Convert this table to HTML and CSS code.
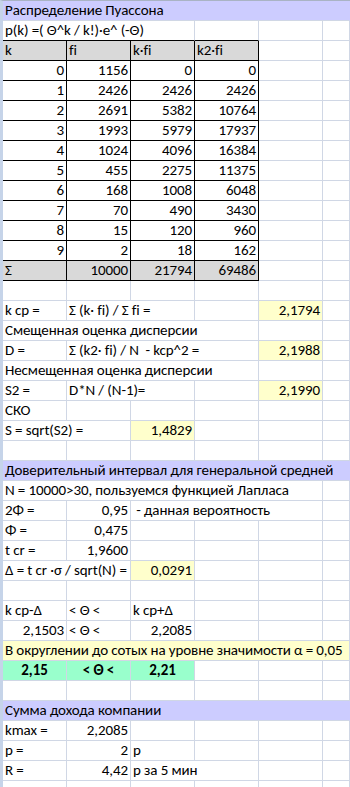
FILE: index.html
```html
<!DOCTYPE html>
<html lang="ru">
<head>
<meta charset="utf-8">
<title>Распределение Пуассона</title>
<link rel="stylesheet" href="styles.css">
</head>
<body>
<div class="sheet">
  <div class="c s6 purple">Распределение Пуассона</div>
  <div class="c s3 bb">p(k) =( Θ^k / k!)·e^ (-Θ)</div><div class="c bb"></div><div class="c"></div><div class="c"></div>
  <div class="c tb gray">k</div><div class="c tb gray">fi</div><div class="c tb gray">k·fi</div><div class="c tb gray">k2·fi</div><div class="c"></div><div class="c"></div>
  <div class="c tb r">0</div><div class="c tb r">1156</div><div class="c tb r">0</div><div class="c tb r">0</div><div class="c"></div><div class="c"></div>
  <div class="c tb r">1</div><div class="c tb r">2426</div><div class="c tb r">2426</div><div class="c tb r">2426</div><div class="c"></div><div class="c"></div>
  <div class="c tb r">2</div><div class="c tb r">2691</div><div class="c tb r">5382</div><div class="c tb r">10764</div><div class="c"></div><div class="c"></div>
  <div class="c tb r">3</div><div class="c tb r">1993</div><div class="c tb r">5979</div><div class="c tb r">17937</div><div class="c"></div><div class="c"></div>
  <div class="c tb r">4</div><div class="c tb r">1024</div><div class="c tb r">4096</div><div class="c tb r">16384</div><div class="c"></div><div class="c"></div>
  <div class="c tb r">5</div><div class="c tb r">455</div><div class="c tb r">2275</div><div class="c tb r">11375</div><div class="c"></div><div class="c"></div>
  <div class="c tb r">6</div><div class="c tb r">168</div><div class="c tb r">1008</div><div class="c tb r">6048</div><div class="c"></div><div class="c"></div>
  <div class="c tb r">7</div><div class="c tb r">70</div><div class="c tb r">490</div><div class="c tb r">3430</div><div class="c"></div><div class="c"></div>
  <div class="c tb r">8</div><div class="c tb r">15</div><div class="c tb r">120</div><div class="c tb r">960</div><div class="c"></div><div class="c"></div>
  <div class="c tb r">9</div><div class="c tb r">2</div><div class="c tb r">18</div><div class="c tb r">162</div><div class="c"></div><div class="c"></div>
  <div class="c tb gray">Σ</div><div class="c tb gray r">10000</div><div class="c tb gray r">21794</div><div class="c tb gray r">69486</div><div class="c"></div><div class="c"></div>
  <div class="c"></div><div class="c"></div><div class="c"></div><div class="c"></div><div class="c"></div><div class="c"></div>
  <div class="c">k cp =</div><div class="c s2">Σ (k· fi) / Σ fi =</div><div class="c"></div><div class="c r yellow">2,1794</div><div class="c"></div>
  <div class="c s4">Смещенная оценка дисперсии</div><div class="c"></div><div class="c"></div>
  <div class="c">D =</div><div class="c s3">Σ (k2· fi) / N&nbsp; - kcp^2 =</div><div class="c r yellow">2,1988</div><div class="c"></div>
  <div class="c s4">Несмещенная оценка дисперсии</div><div class="c"></div><div class="c"></div>
  <div class="c">S2 =</div><div class="c s2">D*N / (N-1)=</div><div class="c"></div><div class="c r yellow">2,1990</div><div class="c"></div>
  <div class="c">СКО</div><div class="c"></div><div class="c"></div><div class="c"></div><div class="c"></div><div class="c"></div>
  <div class="c s2">S = sqrt(S2) =</div><div class="c r yellow">1,4829</div><div class="c"></div><div class="c"></div><div class="c"></div>
  <div class="c"></div><div class="c"></div><div class="c"></div><div class="c"></div><div class="c"></div><div class="c"></div>
  <div class="c s6 purple">Доверительный интервал для генеральной средней</div>
  <div class="c s5">N = 10000&gt;30, пользуемся функцией Лапласа</div><div class="c"></div>
  <div class="c">2Φ =</div><div class="c r">0,95</div><div class="c s3">&nbsp;- данная вероятность</div><div class="c"></div>
  <div class="c">Φ =</div><div class="c r">0,475</div><div class="c"></div><div class="c"></div><div class="c"></div><div class="c"></div>
  <div class="c">t cr =</div><div class="c r">1,9600</div><div class="c"></div><div class="c"></div><div class="c"></div><div class="c"></div>
  <div class="c s2">Δ = t cr ·σ / sqrt(N) =</div><div class="c r yellow">0,0291</div><div class="c"></div><div class="c"></div><div class="c"></div>
  <div class="c"></div><div class="c"></div><div class="c"></div><div class="c"></div><div class="c"></div><div class="c"></div>
  <div class="c">k cp-Δ</div><div class="c">&lt; Θ &lt;</div><div class="c">k cp+Δ</div><div class="c"></div><div class="c"></div><div class="c"></div>
  <div class="c r">2,1503</div><div class="c">&lt; Θ &lt;</div><div class="c r">2,2085</div><div class="c"></div><div class="c"></div><div class="c"></div>
  <div class="c s6 lyellow">В округлении до сотых на уровне значимости α = 0,05</div>
  <div class="c green b ctr">2,15</div><div class="c green b ctr">&lt; Θ &lt;</div><div class="c green b ctr">2,21</div><div class="c"></div><div class="c"></div><div class="c"></div>
  <div class="c"></div><div class="c"></div><div class="c"></div><div class="c"></div><div class="c"></div><div class="c"></div>
  <div class="c s6 purple">Сумма дохода компании</div>
  <div class="c">kmax =</div><div class="c r">2,2085</div><div class="c"></div><div class="c"></div><div class="c"></div><div class="c"></div>
  <div class="c">p =</div><div class="c r">2</div><div class="c">р</div><div class="c"></div><div class="c"></div><div class="c"></div>
  <div class="c">R =</div><div class="c r">4,42</div><div class="c s2">р за 5 мин</div><div class="c"></div><div class="c"></div>
  <div class="c"></div><div class="c"></div><div class="c"></div><div class="c"></div><div class="c"></div><div class="c"></div>
</div>
</body>
</html>
```

FILE: styles.css
```css
html, body {
  margin: 0;
  padding: 0;
  background: #ffffff;
}

body {
  width: 350px;
  height: 787px;
  overflow: hidden;
  font-family: Carlito, Lato, "Noto Sans", sans-serif;
  font-size: 15px;
  letter-spacing: -0.1px;
  color: #000000;
}

.sheet {
  display: grid;
  grid-template-columns: repeat(5, 64px) 27px;
  grid-auto-rows: 20px;
  border-left: 3px solid #c6d4e9;
  border-top: 1px solid #a9b3c4;
}

.c {
  box-sizing: border-box;
  border-right: 1px solid #d0d7e5;
  border-bottom: 1px solid #d0d7e5;
  padding: 0 2px;
  line-height: 19px;
  white-space: nowrap;
  overflow: hidden;
}

.s2 { grid-column: span 2; }
.s3 { grid-column: span 3; }
.s4 { grid-column: span 4; }
.s5 { grid-column: span 5; }
.s6 { grid-column: span 6; }

.r { text-align: right; }
.ctr { text-align: center; }
.b { font-weight: bold; }

.tb {
  border-right-color: #000000;
  border-bottom-color: #000000;
}

.bb { border-bottom-color: #000000; }

.purple {
  background: #ccccff;
  border-right-color: #ccccff;
}

.gray { background: #d9d9d9; }

.yellow { background: #ffffcc; }

.lyellow { background: #ffffcc; }

.green { background: #99ffcc; }
```
